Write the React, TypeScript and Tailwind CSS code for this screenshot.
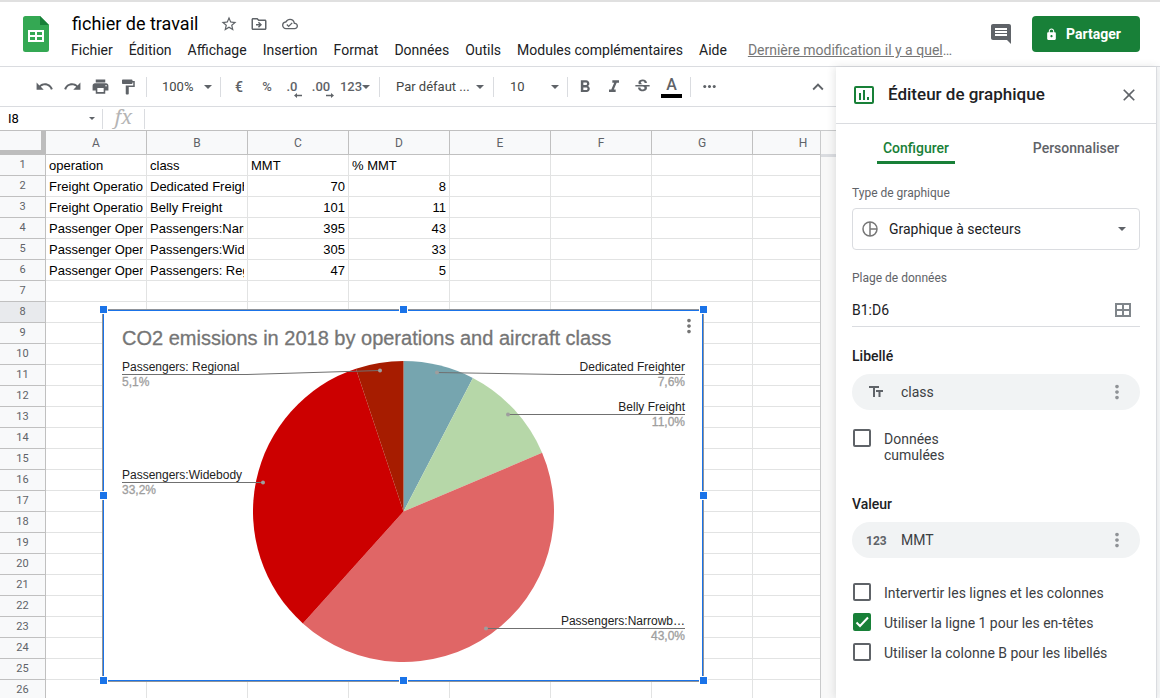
import { useState } from "react";
import type { ReactNode } from "react";
import {
  MdClose,
  MdComment,
  MdFormatBold,
  MdFormatItalic,
  MdFormatPaint,
  MdKeyboardArrowUp,
  MdLock,
  MdMoreHoriz,
  MdMoreVert,
  MdOutlineCloudDone,
  MdOutlineDriveFileMove,
  MdPrint,
  MdRedo,
  MdStarBorder,
  MdStrikethroughS,
  MdUndo,
} from "react-icons/md";

const MENUS = [
  "Fichier",
  "Édition",
  "Affichage",
  "Insertion",
  "Format",
  "Données",
  "Outils",
  "Modules complémentaires",
  "Aide",
];

const COLUMNS = ["A", "B", "C", "D", "E", "F", "G", "H"];
const ROW_COUNT = 26;
const ACTIVE_ROW = 8;

const CELLS: (string | number)[][] = [
  ["operation", "class", "MMT", "% MMT"],
  ["Freight Operations", "Dedicated Freighter", 70, 8],
  ["Freight Operations", "Belly Freight", 101, 11],
  ["Passenger Operations", "Passengers:Narrowbody", 395, 43],
  ["Passenger Operations", "Passengers:Widebody", 305, 33],
  ["Passenger Operations", "Passengers: Regional", 47, 5],
];

interface Slice {
  label: string;
  value: number;
  percent: string;
  color: string;
  side: "left" | "right";
  // y of the leader line, and the dot it points to inside the slice
  lineY: number;
  dot: [number, number];
}

const SLICES: Slice[] = [
  { label: "Dedicated Freighter", value: 70, percent: "7,6%", color: "#76a5af", side: "right", lineY: 65, dot: [335, 63] },
  { label: "Belly Freight", value: 101, percent: "11,0%", color: "#b6d7a8", side: "right", lineY: 105, dot: [406, 105] },
  { label: "Passengers:Narrowb…", value: 395, percent: "43,0%", color: "#e06666", side: "right", lineY: 319, dot: [384, 319] },
  { label: "Passengers:Widebody", value: 305, percent: "33,2%", color: "#cc0000", side: "left", lineY: 173, dot: [161, 173] },
  { label: "Passengers: Regional", value: 47, percent: "5,1%", color: "#a61c00", side: "left", lineY: 65, dot: [278, 61] },
];

const CX = 301.5;
const CY = 202.5;
const R = 150.5;

function piePaths(slices: Slice[]) {
  const total = slices.reduce((sum, s) => sum + s.value, 0);
  let acc = 0;
  return slices.map((s) => {
    const a0 = (acc / total) * Math.PI * 2;
    acc += s.value;
    const a1 = (acc / total) * Math.PI * 2;
    const large = a1 - a0 > Math.PI ? 1 : 0;
    return `M${CX} ${CY}L${CX + R * Math.sin(a0)} ${CY - R * Math.cos(a0)}A${R} ${R} 0 ${large} 1 ${
      CX + R * Math.sin(a1)
    } ${CY - R * Math.cos(a1)}Z`;
  });
}

function PieChart() {
  const paths = piePaths(SLICES);
  return (
    <svg viewBox="0 0 602 373" className="w-full h-full font-['Liberation_Sans',Arial,sans-serif]">
      <text x="20" y="36" fontSize="20" fill="#757575" stroke="#757575" strokeWidth="0.3">
        CO2 emissions in 2018 by operations and aircraft class
      </text>
      {SLICES.map((s, i) => (
        <path key={s.label} d={paths[i]} fill={s.color} />
      ))}
      {SLICES.map((s) => {
        const left = s.side === "left";
        const edge = left ? 20 : 583;
        const elbow = left ? 145 : 457;
        return (
          <g key={s.label}>
            <polyline
              points={`${edge},${s.lineY + 0.5} ${elbow},${s.lineY + 0.5} ${s.dot[0]},${s.dot[1] + 0.5}`}
              fill="none"
              stroke="#707070"
            />
            <circle cx={s.dot[0]} cy={s.dot[1] + 0.5} r="2" fill="#9e9e9e" />
            <text x={edge} y={s.lineY - 3} fontSize="12" fill="#222" textAnchor={left ? "start" : "end"}>
              {s.label}
            </text>
            <text x={edge} y={s.lineY + 12} fontSize="12" fill="#9e9e9e" stroke="#9e9e9e" strokeWidth="0.3" textAnchor={left ? "start" : "end"}>
              {s.percent}
            </text>
          </g>
        );
      })}
    </svg>
  );
}

const HANDLES = [
  "left-[-4px] top-[-5px]",
  "left-[296px] top-[-5px]",
  "left-[596px] top-[-5px]",
  "left-[-4px] top-[181px]",
  "left-[596px] top-[181px]",
  "left-[-4px] top-[366px]",
  "left-[296px] top-[366px]",
  "left-[596px] top-[366px]",
];

function ChartObject() {
  return (
    <div className="absolute left-[102px] top-[179px] w-[602px] h-[373px] bg-white border border-[#8f9399]">
      <div className="absolute inset-0 border border-[#1a73e8]" />
      <div className="absolute -inset-px">
        <PieChart />
      </div>
      <button type="button" aria-label="Options du graphique" className="absolute right-[3px] top-[5px] text-[#757575]">
        <MdMoreVert size={22} />
      </button>
      {HANDLES.map((pos) => (
        <span key={pos} className={`absolute w-[9px] h-[9px] bg-[#1a73e8] border border-white ${pos}`} />
      ))}
    </div>
  );
}

function IconButton({ label, className = "", children }: { label: string; className?: string; children: ReactNode }) {
  return (
    <button
      type="button"
      aria-label={label}
      className={`flex items-center justify-center shrink-0 h-7 text-[#5f6368] ${className}`}
    >
      {children}
    </button>
  );
}

function Separator() {
  return <div className="w-px h-5 shrink-0 bg-[#dadce0]" />;
}

function Caret() {
  return (
    <svg viewBox="0 0 8 4" className="w-2 h-1 shrink-0 pointer-events-none" fill="#5f6368">
      <path d="M0 0h8L4 4z" />
    </svg>
  );
}

function ToolSelect({ label, value, className }: { label: string; value: string; className: string }) {
  return (
    <label className={`flex items-center shrink-0 text-[13px] text-[#444746] ${className}`}>
      <select aria-label={label} defaultValue={value} className="appearance-none flex-1 min-w-0 bg-transparent outline-none">
        <option>{value}</option>
      </select>
      <Caret />
    </label>
  );
}

function SheetsLogo() {
  return (
    <svg viewBox="0 0 26 36" className="w-[26px] h-9 shrink-0">
      <path d="M2.5 0H17l9 9v24.500a2.500 2.500 0 0 1-2.500 2.500h-21A2.500 2.500 0 0 1 0 33.500v-31A2.500 2.500 0 0 1 2.500 0z" fill="#34a853" />
      <path d="M17 0l9 9h-9z" fill="#188038" />
      <path d="M5 14h16v12H5zM7 16v3h5v-3zm7 0v3h5v-3zm-7 5v3h5v-3zm7 0v3h5v-3z" fill="#fff" fillRule="evenodd" />
    </svg>
  );
}

function Header() {
  return (
    <header className="flex items-start h-[67px] shrink-0 border-t-2 border-t-[#e0e0e0] border-b border-b-[#dadce0] pl-[23px] pr-5 pt-[14px] bg-white">
      <SheetsLogo />
      <div className="flex-1 min-w-0 pl-[22px] -mt-1">
        <div className="flex items-center h-6 pl-px text-[#5f6368]">
          <h1 className="text-lg leading-6 text-black">fichier de travail</h1>
          <button type="button" aria-label="Suivre" className="ml-[22px]">
            <MdStarBorder size={18} />
          </button>
          <button type="button" aria-label="Déplacer" className="ml-3">
            <MdOutlineDriveFileMove size={18} />
          </button>
          <button type="button" aria-label="État du document" className="ml-[14px]">
            <MdOutlineCloudDone size={16} />
          </button>
        </div>
        <nav className="flex items-center gap-4 h-7 text-sm whitespace-nowrap text-[#202124]">
          {MENUS.map((m) => (
            <button type="button" key={m}>
              {m}
            </button>
          ))}
          <a href="#" className="ml-[5px] text-[#777]">
            <span className="underline">Dernière modification il y a quel</span>…
          </a>
        </nav>
      </div>
      <button type="button" aria-label="Commentaires" className="mt-[6px] mr-[19px] text-[#5f6368]">
        <MdComment size={24} />
      </button>
      <button
        type="button"
        className="flex items-center gap-2 h-9 w-[108px] pl-[13px] rounded bg-[#188038] text-white text-sm font-bold"
      >
        <MdLock size={13} />
        Partager
      </button>
    </header>
  );
}

function Decimals({ text, flip }: { text: string; flip?: boolean }) {
  return (
    <span className="flex flex-col items-end text-[13px] leading-3 font-medium pt-[6px]">
      {text}
      <svg viewBox="0 0 8 5" className="w-2 h-[5px] -mr-1" fill="#5f6368">
        {flip ? <path d="M8 2.500L5 0v1.700H0v1.600h5V5z" /> : <path d="M0 2.500L3 0v1.700h5v1.600H3V5z" />}
      </svg>
    </span>
  );
}

function Toolbar() {
  return (
    <div className="flex items-center h-10 shrink-0 border-b border-[#dadce0] pl-[30px] pr-1 bg-white">
      <IconButton label="Annuler" className="w-7">
        <MdUndo size={19} />
      </IconButton>
      <IconButton label="Rétablir" className="w-7">
        <MdRedo size={19} />
      </IconButton>
      <IconButton label="Imprimer" className="w-7">
        <MdPrint size={19} />
      </IconButton>
      <IconButton label="Copier la mise en forme" className="w-7 mr-1">
        <MdFormatPaint size={18} />
      </IconButton>
      <Separator />
      <ToolSelect label="Zoom" value="100%" className="w-[73px] pl-[15px] pr-2" />
      <Separator />
      <IconButton label="Devise" className="w-9 text-sm font-medium">
        €
      </IconButton>
      <IconButton label="Pourcentage" className="w-5 text-[13px] font-medium">
        %
      </IconButton>
      <IconButton label="Moins de décimales" className="w-[30px]">
        <Decimals text=".0" />
      </IconButton>
      <IconButton label="Plus de décimales" className="w-7">
        <Decimals text=".00" flip />
      </IconButton>
      <IconButton label="Autres formats" className="w-11 text-[13px] font-medium pr-1">
        123
        <Caret />
      </IconButton>
      <Separator />
      <ToolSelect label="Police" value="Par défaut ..." className="w-[113px] pl-4 pr-[9px]" />
      <Separator />
      <ToolSelect label="Taille" value="10" className="w-[73px] pl-4 pr-2" />
      <Separator />
      <IconButton label="Gras" className="w-[34px]">
        <MdFormatBold size={20} />
      </IconButton>
      <IconButton label="Italique" className="w-6">
        <MdFormatItalic size={20} />
      </IconButton>
      <IconButton label="Barré" className="w-8">
        <MdStrikethroughS size={19} />
      </IconButton>
      <IconButton label="Couleur du texte" className="w-[27px]">
        <span className="flex flex-col items-center w-[21px] border-b-4 border-black text-base leading-[18px] font-medium">A</span>
      </IconButton>
      <div className="w-[5px]" />
      <Separator />
      <IconButton label="Plus" className="w-9">
        <MdMoreHoriz size={19} />
      </IconButton>
      <div className="flex-1" />
      <IconButton label="Masquer les menus" className="w-7">
        <MdKeyboardArrowUp size={22} />
      </IconButton>
    </div>
  );
}

function FormulaBar() {
  return (
    <div className="flex items-center h-[23px] shrink-0 bg-white">
      <label className="flex items-center w-[102px] pl-2 pr-[7px]">
        <input aria-label="Zone de nom" defaultValue="I8" className="flex-1 min-w-0 text-[13px] text-black outline-none" />
        <svg viewBox="0 0 6 3" className="w-[6px] h-[3px]" fill="#5f6368">
          <path d="M0 0h6L3 3z" />
        </svg>
      </label>
      <Separator />
      <span className="w-[41px] pb-1 text-center text-xl leading-5 italic text-[#b5b5b5] font-['Noto_Serif','Liberation_Serif',serif]">
        fx
      </span>
      <Separator />
      <input aria-label="Formule" className="flex-1 min-w-0 px-2 text-[13px] outline-none" />
    </div>
  );
}

function Grid() {
  return (
    <div className="relative flex-1 min-w-0 overflow-hidden bg-white">
      <table className="table-fixed w-[854px] border-separate border-spacing-0 border-t border-[#c0c0c0]">
        <colgroup>
          <col className="w-[46px]" />
          {COLUMNS.map((c) => (
            <col key={c} className="w-[101px]" />
          ))}
        </colgroup>
        <thead>
          <tr className="h-6">
            <th className="p-0 border-r-[5px] border-b-[5px] border-[#bdbdbd] bg-[#f8f9fa]" />
            {COLUMNS.map((c) => (
              <th key={c} className="p-0 border-r border-b border-[#c0c0c0] bg-[#f8f9fa] text-xs font-normal text-[#5f6368]">
                {c}
              </th>
            ))}
          </tr>
        </thead>
        <tbody>
          {Array.from({ length: ROW_COUNT }, (_, r) => (
            <tr key={r} className="h-[21px]">
              <th
                className={`p-0 border-r border-b border-[#c0c0c0] text-[11px] leading-5 font-normal text-[#5f6368] ${
                  r + 1 === ACTIVE_ROW ? "bg-[#e8eaed]" : "bg-[#f8f9fa]"
                }`}
              >
                {r + 1}
              </th>
              {COLUMNS.map((c, i) => {
                const value = CELLS[r]?.[i];
                return (
                  <td
                    key={c}
                    className={`px-[3px] pt-[2px] pb-0 border-r border-b border-[#e2e3e3] text-[13px] leading-[18px] text-black font-['Liberation_Sans',Arial,sans-serif] ${
                      typeof value === "number" ? "text-right" : "text-left"
                    }`}
                  >
                    <div className="overflow-hidden whitespace-nowrap">{value}</div>
                  </td>
                );
              })}
            </tr>
          ))}
        </tbody>
      </table>
      <ChartObject />
    </div>
  );
}

function FieldPill({ icon, label }: { icon: ReactNode; label: string }) {
  return (
    <div className="flex items-center h-9 rounded-full bg-[#f1f3f4] pl-[14px] pr-3 text-sm text-[#3c4043]">
      <span className="w-[35px] shrink-0 text-[#5f6368]">{icon}</span>
      <span className="flex-1">{label}</span>
      <button type="button" aria-label={`Options de ${label}`} className="text-[#8f9296]">
        <MdMoreVert size={22} />
      </button>
    </div>
  );
}

function Check({ label, initial = false, className = "" }: { label: string; initial?: boolean; className?: string }) {
  const [checked, setChecked] = useState(initial);
  return (
    <label className={`flex items-start pl-px text-sm leading-4 text-[#3c4043] ${className}`}>
      <span className="relative w-[18px] h-[18px] shrink-0 mr-[13px]">
        <input
          type="checkbox"
          checked={checked}
          onChange={(e) => setChecked(e.target.checked)}
          className="block appearance-none w-[18px] h-[18px] rounded-xs border-2 border-[#5f6368] checked:bg-[#188038] checked:border-[#188038]"
        />
        {checked && (
          <svg viewBox="0 0 18 18" className="absolute inset-0 pointer-events-none" fill="none" stroke="#fff" strokeWidth="2">
            <path d="M3.500 9.500l3.500 3.500 8-8.500" />
          </svg>
        )}
      </span>
      <span className="pt-[2px]">{label}</span>
    </label>
  );
}

function ChartEditor() {
  return (
    <aside className="z-10 w-[321px] shrink-0 bg-white border-r border-[#dadce0] shadow-[-1px_0_8px_rgba(60,64,67,0.15)]">
      <div className="flex items-center h-[57px] border-b border-[#dadce0] pl-[18px] pr-[17px]">
        <svg viewBox="0 0 20 18" className="w-5 h-[18px]" fill="#188038">
          <path
            fillRule="evenodd"
            d="M2 0h16a2 2 0 0 1 2 2v14a2 2 0 0 1-2 2H2a2 2 0 0 1-2-2V2a2 2 0 0 1 2-2zm0 2v14h16V2zM5 7h2v7H5zM9 4h2v10H9zM13 11h2v3h-2z"
          />
        </svg>
        <h2 className="flex-1 pl-[14px] text-[17px] font-medium text-[#202124]">Éditeur de graphique</h2>
        <button type="button" aria-label="Fermer" className="text-[#5f6368]">
          <MdClose size={20} />
        </button>
      </div>
      <div className="grid grid-cols-2 justify-items-center text-sm leading-5 font-medium">
        <button type="button" className="mt-[14px] px-[6px] pb-[3px] border-b-[3px] border-[#188038] text-[#188038]">
          Configurer
        </button>
        <button type="button" className="mt-[14px] px-[6px] pb-[3px] border-b-[3px] border-transparent text-[#5f6368]">
          Personnaliser
        </button>
      </div>
      <div className="px-4 pt-[21px]">
        <label htmlFor="chart-type" className="block text-xs text-[#5f6368]">
          Type de graphique
        </label>
        <div className="flex items-center h-[42px] mt-[7px] pl-[9px] pr-[13px] border border-[#dadce0] rounded">
          <svg viewBox="0 0 16 16" className="w-4 h-4 shrink-0" fill="none" stroke="#777" strokeWidth="1.500">
            <circle cx="8" cy="8" r="7" />
            <path d="M8 1v14M8 8h7" />
          </svg>
          <select
            id="chart-type"
            className="appearance-none flex-1 min-w-0 pl-[11px] bg-transparent outline-none text-sm text-[#202124]"
          >
            <option>Graphique à secteurs</option>
          </select>
          <Caret />
        </div>

        <label htmlFor="range" className="block mt-5 text-xs text-[#5f6368]">
          Plage de données
        </label>
        <div className="flex items-center h-[34px] mt-[7px] pr-[9px] border-b border-[#dadce0]">
          <input id="range" defaultValue="B1:D6" className="flex-1 min-w-0 text-sm text-[#202124] outline-none" />
          <svg viewBox="0 0 16 14" className="w-4 h-[14px]" fill="none" stroke="#80868b" strokeWidth="2">
            <path d="M1 1h14v12H1zM8 1v12M1 7h14" />
          </svg>
        </div>

        <h3 className="mt-[19px] mb-2 text-sm font-medium text-[#202124]">Libellé</h3>
        <FieldPill
          label="class"
          icon={
            <svg viewBox="0 0 20 12" className="w-5 h-3" fill="#5f6368">
              <path d="M3 0h10v2H9v9H7V2H3zM10 4h7v2h-2.500v5h-2V6H10z" />
            </svg>
          }
        />
        <Check label="Données cumulées" className="mt-[19px] w-28" />

        <h3 className="mt-[31px] mb-2 text-sm font-medium text-[#202124]">Valeur</h3>
        <FieldPill label="MMT" icon={<span className="text-xs font-bold">123</span>} />
        <div className="flex flex-col gap-3 pt-[25px]">
          <Check label="Intervertir les lignes et les colonnes" />
          <Check label="Utiliser la ligne 1 pour les en-têtes" initial />
          <Check label="Utiliser la colonne B pour les libellés" />
        </div>
      </div>
    </aside>
  );
}

export default function App() {
  return (
    <div className="flex flex-col h-screen overflow-hidden bg-white font-[Roboto,sans-serif]">
      <Header />
      <div className="flex flex-1 min-h-0">
        <main className="flex flex-col flex-1 min-w-0">
          <Toolbar />
          <FormulaBar />
          <div className="flex flex-1 min-h-0">
            <Grid />
            <div className="w-4 shrink-0 border-l border-t border-[#c9cacb] bg-[#f8f8f8]">
              <div className="h-[26px] border-b-[3px] border-[#dadce0]" />
            </div>
          </div>
        </main>
        <ChartEditor />
        <div className="w-[3px] shrink-0 bg-[#f8f9fa]" />
      </div>
    </div>
  );
}
